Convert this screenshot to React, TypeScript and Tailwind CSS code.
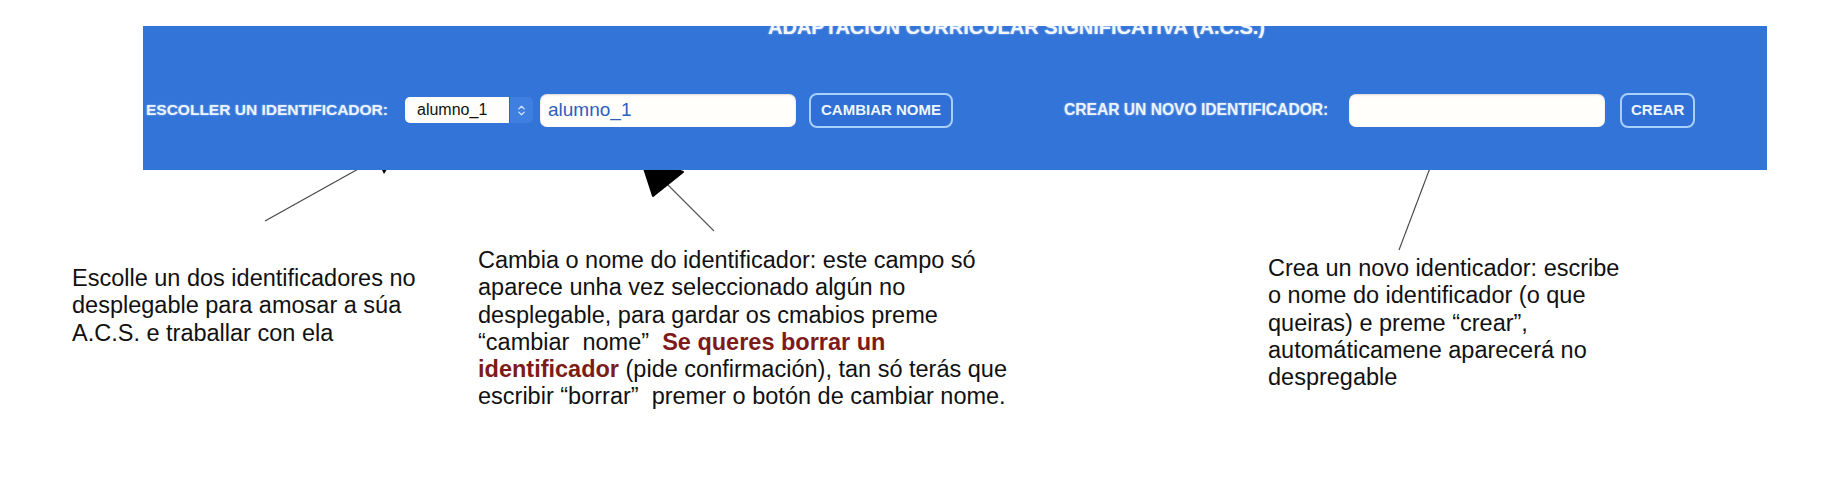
import React from "react";
import { ChevronsUpDown } from "lucide-react";

export default function App() {
  return (
    <div className="relative w-[1824px] h-[480px] bg-white overflow-hidden font-['Liberation_Sans','Helvetica',Arial,sans-serif]">
      <svg
        className="absolute inset-0 z-0 pointer-events-none"
        width="1824"
        height="480"
        viewBox="0 0 1824 480"
      >
        <line x1="265" y1="221" x2="360" y2="168" stroke="#444" strokeWidth="1.1" />
        <polygon points="380,166 389,166 384,174" fill="#000" />
        <line x1="714" y1="231" x2="666" y2="183" stroke="#555" strokeWidth="1.1" />
        <polygon points="640,156 683,172 653,196" fill="#000" stroke="#000" strokeWidth="2" strokeLinejoin="round" />
        <line x1="1430" y1="168" x2="1399" y2="250" stroke="#444" strokeWidth="1.1" />
      </svg>

      <div className="pt-[26px] pl-[143px]">
        <div className="relative z-10 w-[1624px] h-[144px] bg-[#3374d8] overflow-hidden">
          <div className="ml-[625px] mt-[-9px] h-[20px] leading-[20px] text-[20px] font-bold text-[#f2f7ff] whitespace-nowrap [text-shadow:0_0_2px_rgba(220,235,255,0.7)]">
            ADAPTACIÓN CURRICULAR SIGNIFICATIVA (A.C.S.)
          </div>
          <div className="mt-[55px] ml-[3px] flex items-center h-[36px] text-[#eaf3ff] [text-shadow:0_0_2px_rgba(210,230,255,0.6)]">
            <span className="text-[15.5px] font-bold whitespace-nowrap w-[259px]">
              ESCOLLER UN IDENTIFICADOR:
            </span>
            <div className="flex h-[26px] w-[128px] rounded-[5px] overflow-hidden [text-shadow:none]">
              <div className="flex-1 bg-[#fffefb] flex items-center pl-[12px] text-[16px] text-[#111]">
                alumno_1
              </div>
              <div className="w-[24px] bg-[#3f7fe0] flex items-center justify-center border-l border-[#2a62c0]">
                <ChevronsUpDown size={13} strokeWidth={2.5} color="#cfe3ff" />
              </div>
            </div>
            <div className="ml-[7px] w-[256px] h-[33px] rounded-[7px] bg-[#fffefa] flex items-center pl-[8px] text-[19px] text-[#2d5fbf] [text-shadow:none] shadow-[inset_0_1px_2px_rgba(0,0,0,0.15)]">
              alumno_1
            </div>
            <button className="ml-[13px] h-[35px] px-[10px] rounded-[8px] border-2 border-[#a9cffb] bg-[#306fd5] text-[15px] font-bold text-[#eef5ff] whitespace-nowrap">
              CAMBIAR NOME
            </button>
            <span className="ml-[111px] text-[15.6px] font-bold whitespace-nowrap w-[285px]">
              CREAR UN NOVO IDENTIFICADOR:
            </span>
            <div className="w-[256px] h-[33px] rounded-[7px] bg-[#fffefa] shadow-[inset_0_1px_2px_rgba(0,0,0,0.15)]" />
            <button className="ml-[15px] h-[35px] px-[9px] rounded-[8px] border-2 border-[#a9cffb] bg-[#306fd5] text-[15px] font-bold text-[#eef5ff] whitespace-nowrap">
              CREAR
            </button>
          </div>
        </div>
      </div>

      <div className="relative z-10 flex items-start pl-[72px] text-[23.5px] leading-[27.3px] text-[#111]">
        <div className="w-[406px] mt-[95px]">
          <div className="whitespace-pre">Escolle un dos identificadores no</div>
          <div className="whitespace-pre">desplegable para amosar a súa</div>
          <div className="whitespace-pre">A.C.S. e traballar con ela</div>
        </div>
        <div className="w-[790px] mt-[77px]">
          <div className="whitespace-pre">Cambia o nome do identificador: este campo só</div>
          <div className="whitespace-pre">aparece unha vez seleccionado algún no</div>
          <div className="whitespace-pre">desplegable, para gardar os cmabios preme</div>
          <div className="whitespace-pre">
            {"“cambiar  nome”  "}
            <span className="font-bold text-[#7d1a1a]">Se queres borrar un</span>
          </div>
          <div className="whitespace-pre">
            <span className="font-bold text-[#7d1a1a]">identificador</span>
            {" (pide confirmación), tan só terás que"}
          </div>
          <div className="whitespace-pre">{"escribir “borrar”  premer o botón de cambiar nome."}</div>
        </div>
        <div className="mt-[85px]">
          <div className="whitespace-pre">Crea un novo identicador: escribe</div>
          <div className="whitespace-pre">o nome do identificador (o que</div>
          <div className="whitespace-pre">queiras) e preme “crear”,</div>
          <div className="whitespace-pre">automáticamene aparecerá no</div>
          <div className="whitespace-pre">despregable</div>
        </div>
      </div>
    </div>
  );
}
